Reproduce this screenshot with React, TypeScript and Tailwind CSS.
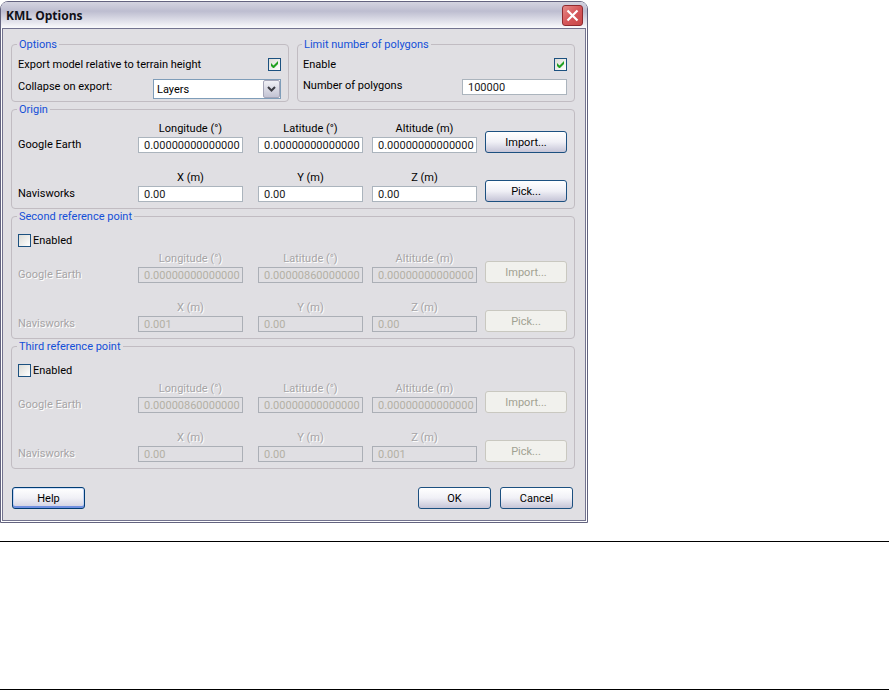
import { useId, useState } from 'react';
import type { ReactNode } from 'react';

// Define the reference point type
type ReferencePoint = {
    title: string;
    geo: [string, string, string];
    model: [string, string, string];
    optional?: boolean;
};

const GEO_LABELS = ['Longitude (°)', 'Latitude (°)', 'Altitude (m)'];
const MODEL_LABELS = ['X (m)', 'Y (m)', 'Z (m)'];

const ZERO = '0.00000000000000';
const SMALL = '0.00000860000000';

const points: ReferencePoint[] = [
    { title: 'Origin', geo: [ZERO, ZERO, ZERO], model: ['0.00', '0.00', '0.00'] },
    { title: 'Second reference point', geo: [ZERO, SMALL, ZERO], model: ['0.001', '0.00', '0.00'], optional: true },
    { title: 'Third reference point', geo: [SMALL, ZERO, ZERO], model: ['0.00', '0.00', '0.001'], optional: true }
];

function Group({ title, className = '', children }: { title: string; className?: string; children: ReactNode }) {
    return (
        <fieldset className={`min-w-0 rounded-[4px] border border-[#c1bcc2] ${className}`}>
            <legend className="-ml-px px-[2px] pt-[2px] leading-[12px] text-[#1450d8]">{title}</legend>
            {children}
        </fieldset>
    );
}

function CheckBox({ id, checked, onChange }: { id: string; checked: boolean; onChange: (checked: boolean) => void }) {
    return (
        <span className="grid size-[13px] shrink-0">
            <input
                id={id}
                type="checkbox"
                checked={checked}
                onChange={e => onChange(e.target.checked)}
                className="col-start-1 row-start-1 size-[13px] appearance-none border border-[#1c5180] bg-linear-to-br from-[#dcdcd7] to-white"
            />
            {checked && (
                <svg viewBox="0 0 13 13" className="pointer-events-none col-start-1 row-start-1 size-[13px]" fill="#21a121">
                    <path d="M3 5v3l2 2h1l4-4V3L5.500 7.500z" />
                </svg>
            )}
        </span>
    );
}

function Button({ children, disabled, focused, className = '' }: { children: ReactNode; disabled?: boolean; focused?: boolean; className?: string }) {
    const look = disabled
        ? 'border-[#c9c8c0] bg-[#f1f1ed] text-[#a1a192]'
        : focused
            ? 'border-[#003c74] bg-linear-to-b from-white via-[#f0f0f6] to-[#cfcfe0] text-black shadow-[inset_0_-2px_0_#6f8fe0,inset_0_1px_0_#cee0fb,inset_1px_0_0_#c0d2f5,inset_-1px_0_0_#c0d2f5]'
            : 'border-[#1c5080] bg-linear-to-b from-white via-[#f0f0f6] to-[#c6c5d7] text-black';
    return (
        <button type="button" disabled={disabled} className={`h-[22px] rounded-[3px] border pt-[2px] text-center leading-[18px] ${look} ${className}`}>
            {children}
        </button>
    );
}

function TextField({ id, value, disabled }: { id: string; value: string; disabled?: boolean }) {
    return (
        <input
            id={id}
            type="text"
            defaultValue={value}
            disabled={disabled}
            className="h-4 w-[105px] border border-[#abb4bd] bg-white pt-px pl-[5px] leading-[13px] text-[#202020] disabled:border-[#abafb6] disabled:bg-transparent disabled:text-[#b3b0a5]"
        />
    );
}

function FieldRow({ name, labels, values, action, disabled }: {
    name: string;
    labels: string[];
    values: string[];
    action: string;
    disabled?: boolean;
}) {
    const id = useId();
    const tone = disabled ? 'text-[#a6a4a6] [text-shadow:1px_1px_0_#fff]' : 'text-black';
    return (
        <div className="grid grid-cols-[120fr_120fr_114fr_113fr_82fr] items-end">
            <span className={`leading-[16px] ${tone}`}>{name}</span>
            {labels.map((label, i) => (
                <div key={label} className="flex w-[105px] flex-col gap-px">
                    <label htmlFor={`${id}-${i}`} className={`text-center leading-[14px] ${tone}`}>{label}</label>
                    <TextField id={`${id}-${i}`} value={values[i]} disabled={disabled} />
                </div>
            ))}
            <Button disabled={disabled}>{action}</Button>
        </div>
    );
}

function PointGroup({ point }: { point: ReferencePoint }) {
    const id = useId();
    const [enabled, setEnabled] = useState(!point.optional);
    return (
        <Group title={point.title} className="pr-[7px] pb-[6px] pl-[6px]">
            {point.optional ? (
                <div className="mb-[5px] flex items-center gap-[2px] pt-[11px]">
                    <CheckBox id={id} checked={enabled} onChange={setEnabled} />
                    <label htmlFor={id} className="pt-px leading-[12px]">Enabled</label>
                </div>
            ) : (
                <div className="h-[6px]" />
            )}
            <div className="flex flex-col gap-[18px]">
                <FieldRow name="Google Earth" labels={GEO_LABELS} values={point.geo} action="Import..." disabled={!enabled} />
                <FieldRow name="Navisworks" labels={MODEL_LABELS} values={point.model} action="Pick..." disabled={!enabled} />
            </div>
        </Group>
    );
}

function TitleBar() {
    return (
        <header className="flex h-[26px] items-center justify-between rounded-t-[6px] bg-linear-to-b from-[#d4d4e0] via-[#bdbdd0] via-35% to-[#fafafc] pr-[4px] pl-[5px]">
            <h1 className="pt-[2px] font-['Open_Sans',sans-serif] text-[12px] font-bold text-[#101018]">KML Options</h1>
            <button type="button" aria-label="Close" className="flex size-[21px] items-center justify-center rounded-[3px] border border-[#8f2a2f] bg-linear-to-br from-[#e58a88] via-[#d5565a] to-[#c94848]">
                <svg viewBox="0 0 13 13" className="size-[13px]" stroke="#fff" strokeWidth="2.200">
                    <path d="M1.500 1.500l10 10M11.500 1.500l-10 10" />
                </svg>
            </button>
        </header>
    );
}

function App() {
    const [relative, setRelative] = useState(true);
    const [limit, setLimit] = useState(true);

    return (
        <main className="bg-white pt-px font-[Roboto,'DejaVu_Sans',sans-serif] text-[11px] text-black">
            <div className="w-full max-w-[588px] rounded-t-[8px] border border-[#63637f] bg-white">
                <TitleBar />
                <form className="mx-px mb-px border border-[#73738f] bg-[#e0dfe3] pt-2 pr-[10px] pb-[11px] pl-2">
                    <div className="grid grid-cols-2 gap-2">
                        <Group title="Options" className="pr-[7px] pb-[2px] pl-[6px]">
                            <div className="flex items-center justify-between pt-[6px]">
                                <label htmlFor="relative" className="pt-[2px] leading-[12px]">Export model relative to terrain height</label>
                                <CheckBox id="relative" checked={relative} onChange={setRelative} />
                            </div>
                            <div className="mt-2 flex items-start justify-between">
                                <label htmlFor="collapse" className="leading-[16px]">Collapse on export:</label>
                                <div className="relative w-32">
                                    <select id="collapse" defaultValue="Layers" className="h-5 w-full appearance-none border border-[#7f9db9] bg-white pt-[2px] pl-[3px]">
                                        <option>None</option>
                                        <option>Layers</option>
                                        <option>All objects</option>
                                    </select>
                                    <span className="pointer-events-none absolute top-px right-px flex h-[18px] w-[17px] items-center justify-center rounded-[2px] border border-[#a5a5b8] bg-linear-to-b from-[#f0f0f5] to-[#c3c3d3]">
                                        <svg viewBox="0 0 9 6" className="h-[6px] w-[9px]" fill="none" stroke="#3c3c44" strokeWidth="2">
                                            <path d="M1 1l3.500 3.500L8 1" />
                                        </svg>
                                    </span>
                                </div>
                            </div>
                        </Group>
                        <Group title="Limit number of polygons" className="pr-[7px] pb-[2px] pl-[5px]">
                            <div className="flex items-center justify-between pt-[6px]">
                                <label htmlFor="limit" className="pt-[2px] leading-[12px]">Enable</label>
                                <CheckBox id="limit" checked={limit} onChange={setLimit} />
                            </div>
                            <div className="mt-2 flex items-start justify-between">
                                <label htmlFor="polygons" className="leading-[14px]">Number of polygons</label>
                                <TextField id="polygons" value="100000" disabled={!limit} />
                            </div>
                        </Group>
                    </div>
                    {points.map(point => (
                        <PointGroup key={point.title} point={point} />
                    ))}
                    <div className="mt-[18px] flex gap-[9px] pr-[2px] pl-px">
                        <Button focused className="mr-auto w-[73px]">Help</Button>
                        <Button className="w-[73px]">OK</Button>
                        <Button className="w-[73px]">Cancel</Button>
                    </div>
                </form>
            </div>
            <div className="mt-[18px] h-[149px] border-y border-black" />
        </main>
    );
}

export default App;
